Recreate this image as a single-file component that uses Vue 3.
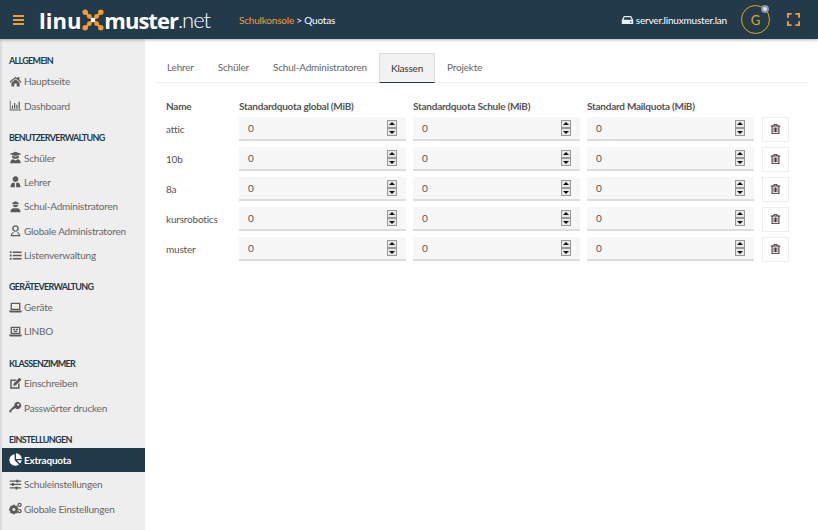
<script setup>
const icons = {
  home: 'M8 2 L0.5 8.2 L1.6 9.4 L8 4.1 L14.4 9.4 L15.5 8.2 L12.8 6 V2.5 H10.6 V4.2 Z M3 9.4 L8 5.3 L13 9.4 V14.2 H9.5 V10.5 H6.5 V14.2 H3 Z',
  chart: 'M1 2 H2 V13 H15 V14 H1 Z M3.5 8 H5 V12 H3.5 Z M6.2 5 H7.7 V12 H6.2 Z M9 7 H10.5 V12 H9 Z M11.8 3.5 H13.3 V12 H11.8 Z',
  student: 'M8 1 L15.5 3.6 L8 6.2 L0.5 3.6 Z M3.8 5.6 L8 7 L12.2 5.6 V8 C11.5 10.2 4.5 10.2 3.8 8 Z M1.5 15 C1.5 12 3.5 10.4 5.2 10.2 L8 11.6 L10.8 10.2 C12.5 10.4 14.5 12 14.5 15 Z',
  teacher: 'M8 1.5 A3.6 3.6 0 1 1 7.99 1.5 Z M1.8 15 C1.8 11.5 3.8 9.3 5.6 9.3 L7.2 10.3 V15 Z M8.8 15 V10.3 L10.4 9.3 C12.2 9.3 14.2 11.5 14.2 15 Z',
  admin: 'M4.2 3.4 L8 1.6 L11.8 3.4 V5 H4.2 Z M4.6 5.8 H11.4 C11.4 9.8 4.6 9.8 4.6 5.8 Z M1.8 15 C1.8 11.8 3.6 10 5.6 10 H10.4 C12.4 10 14.2 11.8 14.2 15 Z',
  gadmin: 'M8 1.5 C5.2 1.5 4 3.5 4 5.5 C4 8 5.8 9.6 8 9.6 C10.2 9.6 12 8 12 5.5 C12 3.5 10.8 1.5 8 1.5 Z M8 3.2 C9.5 3.2 10.3 4.2 10.3 5.5 C10.3 7 9.3 8 8 8 C6.7 8 5.7 7 5.7 5.5 C5.7 4.2 6.5 3.2 8 3.2 Z M2 15 C2 12 3.8 10.2 5.6 10 L6.4 11.2 C4.8 11.6 3.9 12.2 3.7 13.4 H12.3 C12.1 12.2 11.2 11.6 9.6 11.2 L10.4 10 C12.2 10.2 14 12 14 15 Z',
  list: 'M1 2.8 H3.2 V5 H1 Z M1 6.9 H3.2 V9.1 H1 Z M1 11 H3.2 V13.2 H1 Z M4.6 3 H15.5 V4.8 H4.6 Z M4.6 7.1 H15.5 V8.9 H4.6 Z M4.6 11.2 H15.5 V13 H4.6 Z',
  laptop: 'M2 2 H14 V11 H2 Z M3.6 3.6 V9.4 H12.4 V3.6 Z M0.3 11.8 H15.7 V13 L14.6 14.2 H1.4 L0.3 13 Z',
  linbo: 'M2 2 H14 V11 H2 Z M3.6 3.6 V9.4 H12.4 V3.6 Z M0.3 11.8 H15.7 V13 L14.6 14.2 H1.4 L0.3 13 Z M5 4.6 H7.5 V6.6 H5 Z M8.5 4.6 H11 V6.6 H8.5 Z M6 7.2 H10 V8.6 H6 Z',
  edit: 'M1.5 3 H9.5 L7.8 4.8 H3.3 V12.7 H11.2 V8.8 L13 7 V14.5 H1.5 Z M12.8 0.8 L15.4 3.4 L8.5 10.3 L5.2 11 L5.9 7.7 Z',
  key: 'M10.5 1 A4.5 4.5 0 1 1 7.4 8.7 L6 10.1 H4.6 V11.5 H3.2 V12.9 L2 14.1 H0.5 V11.7 L6.6 5.6 A4.5 4.5 0 0 1 10.5 1 Z M11.4 3.2 A1.3 1.3 0 1 0 11.41 3.2 Z',
  pie: 'M7 1.6 V9 L12.2 14.2 C10.9 15.2 9.5 15.7 8 15.7 A7 7 0 0 1 7 1.6 Z M8.6 0.3 A7 7 0 0 1 15.7 7.4 H8.6 Z M9.6 9 H15.6 C15.4 10.7 14.6 12.1 13.5 13 Z',
  sliders: 'M1 3 H9 V2 H11.5 V3 H15 V4.5 H11.5 V5.5 H9 V4.5 H1 Z M1 7.2 H3.5 V6.2 H6 V7.2 H15 V8.7 H6 V9.7 H3.5 V8.7 H1 Z M1 11.5 H8 V10.5 H10.5 V11.5 H15 V13 H10.5 V14 H8 V13 H1 Z',
  cogs: 'M4.6 3.5 H7.4 L7.8 5 L9.2 4.3 L11 6.1 L10.3 7.5 L11.8 7.9 V10.7 L10.3 11.1 L11 12.5 L9.2 14.3 L7.8 13.6 L7.4 15 H4.6 L4.2 13.6 L2.8 14.3 L1 12.5 L1.7 11.1 L0.2 10.7 V7.9 L1.7 7.5 L1 6.1 L2.8 4.3 L4.2 5 Z M6 7.4 A1.9 1.9 0 1 0 6.01 7.4 Z M13 1 A2.6 2.6 0 1 1 12.99 1 Z M13 2.6 A1 1 0 1 0 13.01 2.6 Z M13 8.6 A2.6 2.6 0 1 1 12.99 8.6 Z M13 10.2 A1 1 0 1 0 13.01 10.2 Z'
}

const groups = [
  { title: 'ALLGEMEIN', items: [['home', 'Hauptseite'], ['chart', 'Dashboard']] },
  { title: 'BENUTZERVERWALTUNG', items: [['student', 'Schüler'], ['teacher', 'Lehrer'], ['admin', 'Schul-Administratoren'], ['gadmin', 'Globale Administratoren'], ['list', 'Listenverwaltung']] },
  { title: 'GERÄTEVERWALTUNG', items: [['laptop', 'Geräte'], ['linbo', 'LINBO']] },
  { title: 'KLASSENZIMMER', items: [['edit', 'Einschreiben'], ['key', 'Passwörter drucken']] },
  { title: 'EINSTELLUNGEN', items: [['pie', 'Extraquota'], ['sliders', 'Schuleinstellungen'], ['cogs', 'Globale Einstellungen']] }
]

const tabs = ['Lehrer', 'Schüler', 'Schul-Administratoren', 'Klassen', 'Projekte']
const classes = ['attic', '10b', '8a', 'kursrobotics', 'muster']
</script>

<template>
  <div class="page">
    <header class="topbar">
      <button class="burger" aria-label="Menü"><i></i><i></i><i></i></button>
      <div class="logo">
        <span class="logo-bold">linu</span>
        <svg class="logo-x" viewBox="0 0 24 24" width="22" height="22">
          <g stroke="#f39c33" stroke-width="2.4">
            <line x1="4" y1="4" x2="20" y2="20" />
            <line x1="20" y1="4" x2="4" y2="20" />
          </g>
          <g fill="#f39c33">
            <circle cx="3.5" cy="3.5" r="3" /><circle cx="20.5" cy="3.5" r="3" />
            <circle cx="3.5" cy="20.5" r="3" /><circle cx="20.5" cy="20.5" r="3" />
            <circle cx="8" cy="8" r="2.6" /><circle cx="16" cy="8" r="2.6" />
            <circle cx="8" cy="16" r="2.6" /><circle cx="16" cy="16" r="2.6" />
          </g>
          <circle cx="12" cy="12" r="2.4" fill="#fff" />
        </svg>
        <span class="logo-bold muster">muster</span><span class="logo-thin">.net</span>
      </div>
      <div class="crumb"><span class="crumb-link">Schulkonsole</span> &gt; Quotas</div>
      <div class="server">
        <svg viewBox="0 0 16 12" width="13" height="10">
          <path d="M3.5 1 H12.5 L15 6 V11 H1 V6 Z M3 5.6 H13 L11.7 2.6 H4.3 Z" fill="#e8f0f6" fill-rule="evenodd" />
          <circle cx="12" cy="8.4" r=".9" fill="#233a4b" />
        </svg>
        <span>server.linuxmuster.lan</span>
      </div>
      <div class="avatar">
        G
        <span class="avatar-badge"></span>
      </div>
      <svg class="expand" viewBox="0 0 14 14" width="13" height="13">
        <path d="M1 5 V1 H5 M9 1 H13 V5 M13 9 V13 H9 M5 13 H1 V9" fill="none" stroke="#f39c33" stroke-width="2" />
      </svg>
    </header>

    <div class="body">
      <aside class="sidebar">
        <section v-for="g in groups" :key="g.title" class="group">
          <h4>{{ g.title }}</h4>
          <a v-for="it in g.items" :key="it[1]" class="item" :class="{ active: it[1] === 'Extraquota' }">
            <svg viewBox="0 0 16 16" width="13" height="13"><path :d="icons[it[0]]" fill="currentColor" fill-rule="evenodd" /></svg>
            <span>{{ it[1] }}</span>
          </a>
        </section>
      </aside>

      <main class="content">
        <nav class="tabs">
          <a v-for="t in tabs" :key="t" class="tab" :class="{ current: t === 'Klassen' }">{{ t }}</a>
        </nav>
        <div class="table">
          <div class="row head">
            <div>Name</div>
            <div>Standardquota global (MiB)</div>
            <div>Standardquota Schule (MiB)</div>
            <div>Standard Mailquota (MiB)</div>
            <div></div>
          </div>
          <div v-for="c in classes" :key="c" class="row">
            <div class="name">{{ c }}</div>
            <div v-for="n in 3" :key="n" class="field">
              <input type="text" value="0" />
              <span class="spin"><b class="up"></b><b class="down"></b></span>
            </div>
            <button class="trash" aria-label="Löschen">
              <svg viewBox="0 0 14 14" width="11" height="12">
                <path d="M5 0.5 H9 L10 2.5 H13 V3.7 H12 V13.5 H2 V3.7 H1 V2.5 H4 Z M5.3 2.5 H8.7 L8.2 1.5 H5.8 Z M3.3 3.7 V12.3 H10.7 V3.7 Z M4.6 5 H5.8 V11 H4.6 Z M6.4 5 H7.6 V11 H6.4 Z M8.2 5 H9.4 V11 H8.2 Z" fill="#3a2a2e" fill-rule="evenodd" />
              </svg>
            </button>
          </div>
        </div>
      </main>
    </div>
  </div>
</template>

<style>
html, body { background: #fff; }
</style>

<style scoped>
.page {
  width: 818px;
  height: 530px;
  overflow: hidden;
  font-family: Lato, "Noto Sans", sans-serif;
  font-size: 10px;
  letter-spacing: -.2px;
  color: #555;
}

.topbar {
  height: 39px;
  background: #233a4b;
  display: flex;
  align-items: center;
  box-shadow: 0 1px 3px rgba(0, 0, 0, .3);
  position: relative;
  color: #fff;
}
.burger {
  margin-left: 13px;
  width: 11px;
  padding: 0;
  border: 0;
  background: none;
  display: flex;
  flex-direction: column;
  gap: 2px;
}
.burger i { display: block; height: 2px; background: #f39c33; }

.logo {
  margin-left: 15px;
  width: 176px;
  flex: none;
  display: flex;
  align-items: center;
  font-family: "Open Sans", sans-serif;
  font-size: 22px;
  line-height: 30px;
  letter-spacing: 0;
}
.logo-bold { font-weight: 700; }
.muster { letter-spacing: -1px; }
.logo-thin { font-weight: 300; font-family: Lato, sans-serif; font-size: 22px; letter-spacing: -1px; }
.logo-x { margin: 0 0 0 1px; flex: none; }

.crumb { margin-left: 24px; }
.crumb-link { color: #f39c33; }

.server {
  margin-left: auto;
  display: flex;
  align-items: center;
  gap: 2px;
}
.avatar {
  margin-left: 14px;
  width: 27px;
  height: 27px;
  border: 1px solid #e0a91c;
  border-radius: 50%;
  display: flex;
  align-items: center;
  justify-content: center;
  color: #e0a91c;
  font-size: 13px;
  position: relative;
}
.avatar-badge {
  position: absolute;
  top: -1px;
  right: 0;
  width: 8px;
  height: 8px;
  background: #dde;
  border: 2px solid #8a949c;
  border-radius: 50%;
  box-sizing: border-box;
}
.expand { margin: 0 18px 0 17px; }

.body { display: flex; height: 491px; }

.sidebar {
  width: 143px;
  flex: none;
  background: #eee;
  border-left: 2px solid #dcdcdc;
  padding-top: 12.4px;
}
.group { margin-bottom: 10px; }
.group h4 {
  margin: 0;
  height: 17.6px;
  line-height: 19px;
  padding-left: 7px;
  font-size: 9px;
  letter-spacing: -.7px;
  font-weight: 700;
  color: #233a4b;
}
.item {
  display: flex;
  align-items: center;
  gap: 2px;
  height: 24.4px;
  padding-left: 7px;
  color: #666;
}
.item svg { color: #5a5a5a; flex: none; }
.item.active { background: #233a4b; color: #fff; font-weight: 700; }
.item.active svg { color: #fff; }

.content { flex: 1; padding: 14px 10px 0 10px; }

.tabs {
  display: flex;
  height: 29px;
  border-bottom: 1px solid #eee;
}
.tab {
  padding: 0 12px;
  line-height: 29px;
  color: #666;
}
.tab.current {
  background: #f2f2f2;
  border: 1px solid #ddd;
  border-bottom: 1px solid #233a4b;
  color: #333;
  height: 28px;
  line-height: 28px;
  padding: 0 11px;
}

.table { padding: 14px 0 0 11px; }
.row {
  display: grid;
  grid-template-columns: 73px 174px 174px 175px 27px;
  align-items: center;
  height: 30px;
}
.row.head {
  height: 17px;
  font-weight: 700;
  letter-spacing: -.25px;
  color: #555;
}
.field {
  width: 167px;
  height: 24px;
  background: #f7f7f7;
  border-bottom: 2px solid #ddd;
  box-sizing: border-box;
  display: flex;
  align-items: center;
}
.field input {
  flex: 1;
  min-width: 0;
  height: 100%;
  border: 0;
  background: none;
  padding: 0 0 0 9px;
  font: inherit;
  color: #555;
  outline: none;
}
.spin {
  width: 10px;
  margin-right: 9px;
  display: flex;
  flex-direction: column;
}
.spin b {
  height: 8px;
  background: #e8e8e8;
  border: 1px solid #999;
  box-sizing: border-box;
  position: relative;
}
.spin b::after {
  content: "";
  position: absolute;
  left: 1px;
  border-left: 3px solid transparent;
  border-right: 3px solid transparent;
}
.spin .up::after { top: 1px; border-bottom: 3px solid #111; }
.spin .down::after { top: 2px; border-top: 3px solid #111; }

.trash {
  width: 27px;
  height: 25px;
  padding: 0;
  background: #fff;
  border: 1px solid #eee;
  display: flex;
  align-items: center;
  justify-content: center;
}
</style>
